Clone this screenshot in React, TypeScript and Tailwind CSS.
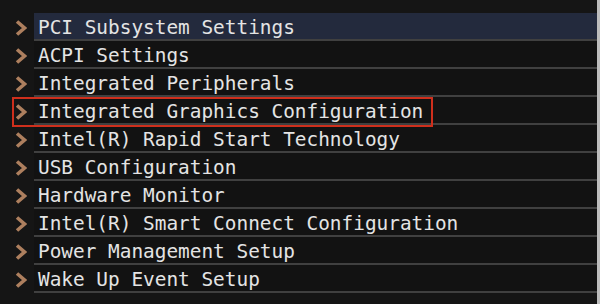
import React from "react";

const items = [
  "PCI Subsystem Settings",
  "ACPI Settings",
  "Integrated Peripherals",
  "Integrated Graphics Configuration",
  "Intel(R) Rapid Start Technology",
  "USB Configuration",
  "Hardware Monitor",
  "Intel(R) Smart Connect Configuration",
  "Power Management Setup",
  "Wake Up Event Setup",
];

function Chevron() {
  return (
    <svg width="12" height="16" viewBox="0 0 12 16">
      <polyline
        points="2,1.5 9.5,8 2,14.5"
        fill="none"
        stroke="#ad7f5e"
        strokeWidth="3.6"
        strokeLinejoin="miter"
      />
    </svg>
  );
}

export default function App() {
  return (
    <div className="relative w-[600px] h-[304px] overflow-hidden bg-[#151515] pt-[13px] border-r-[3px] border-r-[#bdbdbd]">
      {items.map((label, i) => (
        <div key={label} className="flex h-[28px]">
          <div className="w-[34px] shrink-0 flex items-center pl-[15px] pt-[2px]">
            <Chevron />
          </div>
          <div
            className={`flex-1 flex items-center pl-[4px] border-b-2 border-b-[#404040] ${
              i === 0 ? "bg-[#232a3d]" : "bg-[#121212]"
            }`}
          >
            <span className="text-[19.4px] leading-none text-[#e4e4e4] whitespace-pre [font-family:'DejaVu_Sans_Mono',monospace] pt-[4px]">
              {label}
            </span>
          </div>
        </div>
      ))}
      <div className="absolute left-[12px] top-[97px] w-[421px] h-[30px] border-2 border-[#cf2f1c]" />
    </div>
  );
}
